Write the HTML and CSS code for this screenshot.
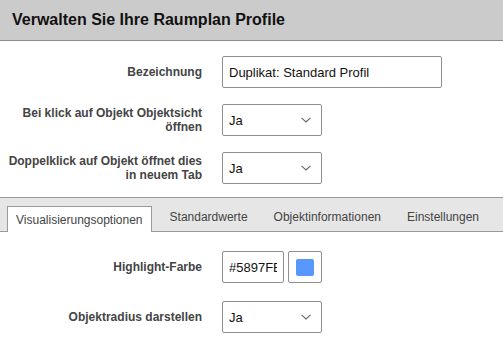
FILE: index.html
```html
<!DOCTYPE html>
<html lang="de">
<head>
<meta charset="utf-8">
<title>Raumplan Profile</title>
<link rel="stylesheet" href="styles.css">
</head>
<body>
<div class="page">
  <header class="header">
    <h1 class="title">Verwalten Sie Ihre Raumplan Profile</h1>
  </header>

  <section class="form form-top">
    <label class="label">Bezeichnung</label>
    <div class="control"><div class="input input-wide">Duplikat: Standard Profil</div></div>

    <label class="label">Bei klick auf Objekt Objektsicht öffnen</label>
    <div class="control">
      <div class="select"><span>Ja</span>
        <svg class="chev" width="10" height="6" viewBox="0 0 10 6"><path d="M0.5 0.8 L5 5 L9.5 0.8" fill="none" stroke="#666" stroke-width="1.1"/></svg>
      </div>
    </div>

    <label class="label">Doppelklick auf Objekt öffnet dies in neuem Tab</label>
    <div class="control">
      <div class="select"><span>Ja</span>
        <svg class="chev" width="10" height="6" viewBox="0 0 10 6"><path d="M0.5 0.8 L5 5 L9.5 0.8" fill="none" stroke="#666" stroke-width="1.1"/></svg>
      </div>
    </div>
  </section>

  <nav class="tabs">
    <div class="tab tab-active">Visualisierungsoptionen</div>
    <div class="tab">Standardwerte</div>
    <div class="tab">Objektinformationen</div>
    <div class="tab">Einstellungen</div>
  </nav>

  <section class="form form-tab">
    <label class="label">Highlight-Farbe</label>
    <div class="control color-row">
      <div class="input input-color"><span class="clip">#5897FE</span></div>
      <div class="color-btn"><span class="swatch"></span></div>
    </div>

    <label class="label">Objektradius darstellen</label>
    <div class="control">
      <div class="select"><span>Ja</span>
        <svg class="chev" width="10" height="6" viewBox="0 0 10 6"><path d="M0.5 0.8 L5 5 L9.5 0.8" fill="none" stroke="#666" stroke-width="1.1"/></svg>
      </div>
    </div>
  </section>
</div>
</body>
</html>
```

FILE: styles.css
```css
* { box-sizing: border-box; }

html, body {
  margin: 0;
  padding: 0;
  background: #fff;
  font-family: "Liberation Sans", Arial, sans-serif;
  color: #222;
}

.page {
  width: 503px;
}

.header {
  background: #cbcbcb;
  height: 41px;
  border-bottom: 1px solid #8c8c8c;
  display: flex;
  align-items: center;
  padding: 0 12px;
}

.title {
  margin: 0;
  font-size: 16px;
  font-weight: bold;
  color: #111;
  line-height: 20px;
}

.form {
  display: grid;
  grid-template-columns: 195px auto;
  column-gap: 20px;
  padding-left: 7px;
  align-items: center;
}

.form-top {
  padding-top: 15px;
  padding-bottom: 13px;
  row-gap: 16px;
}

.form-tab {
  padding-top: 19px;
  row-gap: 18px;
}

.label {
  text-align: right;
  font-size: 12px;
  font-weight: bold;
  color: #444;
  line-height: 14px;
}

.control {
  display: flex;
  align-items: center;
}

.input,
.select {
  height: 32px;
  border: 1px solid #8f8f8f;
  border-radius: 2px;
  font-size: 13px;
  color: #111;
  display: flex;
  align-items: center;
  padding: 0 6px;
  background: #fff;
  white-space: nowrap;
  overflow: hidden;
}

.input-wide { width: 220px; }

.select {
  width: 100px;
  justify-content: space-between;
  padding-right: 10px;
}

.chev { display: block; }

.input-color {
  width: 62px;
}

.clip {
  display: block;
  width: 48px;
  overflow: hidden;
  white-space: nowrap;
}

.color-row { gap: 4px; }

.color-btn {
  width: 34px;
  height: 32px;
  border: 1px solid #8f8f8f;
  border-radius: 2px;
  display: flex;
  align-items: center;
  justify-content: center;
  background: #fff;
}

.swatch {
  width: 18px;
  height: 17px;
  border-radius: 2px;
  background: #5897fe;
}

.tabs {
  background: #e6e6e6;
  border-top: 1px solid #9a9a9a;
  border-bottom: 1px solid #9a9a9a;
  height: 35px;
  display: flex;
  align-items: flex-end;
  padding-left: 7px;
}

.tab {
  font-size: 12px;
  color: #444;
  height: 26px;
  display: flex;
  align-items: center;
  padding: 0 13px;
  margin-bottom: -1px;
  line-height: 14px;
  position: relative;
  top: -2px;
}

.tab-active {
  background: #fff;
  border: 1px solid #9a9a9a;
  border-bottom: none;
  padding: 1px 8px 0;
  margin-right: 5px;
  top: 0;
}
```
